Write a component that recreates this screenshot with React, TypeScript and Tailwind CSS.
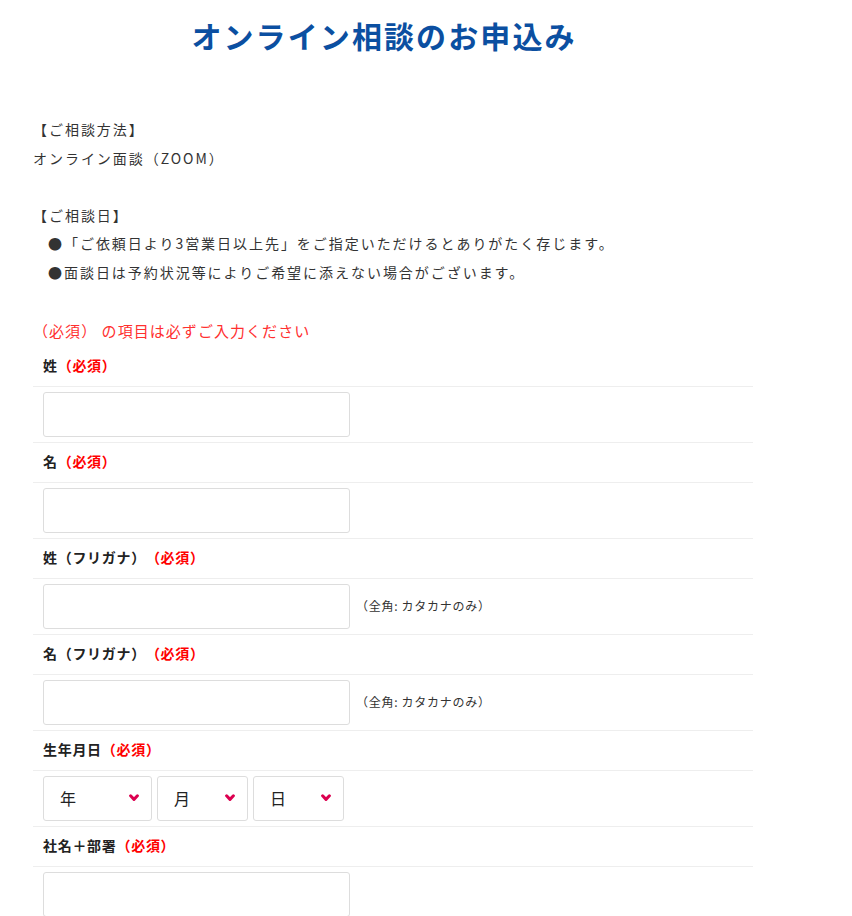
import { useState } from "react";

type Field = {
  label: string;
  kind: "text" | "date";
  hint?: string;
};

const fields: Field[] = [
  { label: "姓", kind: "text" },
  { label: "名", kind: "text" },
  { label: "姓（フリガナ）", kind: "text", hint: "（全角: カタカナのみ）" },
  { label: "名（フリガナ）", kind: "text", hint: "（全角: カタカナのみ）" },
  { label: "生年月日", kind: "date" },
  { label: "社名＋部署", kind: "text" },
];

function Chevron() {
  return (
    <svg width="10" height="8" viewBox="0 0 10 8" fill="none">
      <path
        d="M1.6 1.8 L5 5.4 L8.4 1.8"
        stroke="#dc0050"
        strokeWidth="3"
        strokeLinecap="round"
        strokeLinejoin="round"
      />
    </svg>
  );
}

function SelectBox({ label, width }: { label: string; width: string }) {
  return (
    <div
      className={`${width} h-[45px] border border-[#dddddd] rounded-[3px] flex items-center justify-between pl-[16px] pr-[12px] text-[16px] text-[#222]`}
    >
      <span>{label}</span>
      <Chevron />
    </div>
  );
}

export default function App() {
  const [values, setValues] = useState<Record<number, string>>({});

  return (
    <div className="min-h-screen bg-white text-[#333] font-['Noto_Sans_CJK_JP',sans-serif]">
      <h1 className="w-[768px] pt-[13px] text-center text-[30px] leading-[45px] font-bold tracking-[0.07em] text-[#0b4fa1]">
        オンライン相談のお申込み
      </h1>

      <div className="ml-[33px] mt-[57px] text-[14px] leading-[28.6px] tracking-[0.14em]">
        <p>【ご相談方法】</p>
        <p>オンライン面談（ZOOM）</p>
        <p>&nbsp;</p>
        <p>【ご相談日】</p>
        <p className="pl-[15px]">●「ご依頼日より3営業日以上先」をご指定いただけるとありがたく存じます。</p>
        <p className="pl-[15px]">●面談日は予約状況等によりご希望に添えない場合がございます。</p>
      </div>

      <p className="ml-[33px] mt-[32px] text-[15px] leading-[24px] tracking-[0.07em] text-[#ff3030]">
        （必須） の項目は必ずご入力ください
      </p>

      <form className="ml-[33px] mt-[3px] w-[720px]">
        {fields.map((f, i) => (
          <div key={f.label}>
            <div
              className={`h-[40px] flex items-center pb-[1px] px-[10px] text-[14px] font-bold tracking-[0.05em] text-[#222] ${
                i === 0 ? "" : "border-t border-[#eeeeee]"
              }`}
            >
              {f.label}
              <span className="text-[#ff0000]">（必須）</span>
            </div>
            <div className="h-[56px] border-t border-[#eeeeee] flex items-center px-[10px]">
              {f.kind === "text" ? (
                <>
                  <input
                    type="text"
                    value={values[i] ?? ""}
                    onChange={(e) => setValues({ ...values, [i]: e.target.value })}
                    className="w-[307px] h-[45px] border border-[#dddddd] rounded-[3px] px-[10px] text-[14px] outline-none"
                  />
                  {f.hint && (
                    <span className="ml-[6px] text-[12px] tracking-[0.06em] text-[#333]">
                      {f.hint}
                    </span>
                  )}
                </>
              ) : (
                <div className="flex gap-[5px]">
                  <SelectBox label="年" width="w-[109px]" />
                  <SelectBox label="月" width="w-[91px]" />
                  <SelectBox label="日" width="w-[91px]" />
                </div>
              )}
            </div>
          </div>
        ))}
      </form>
    </div>
  );
}
